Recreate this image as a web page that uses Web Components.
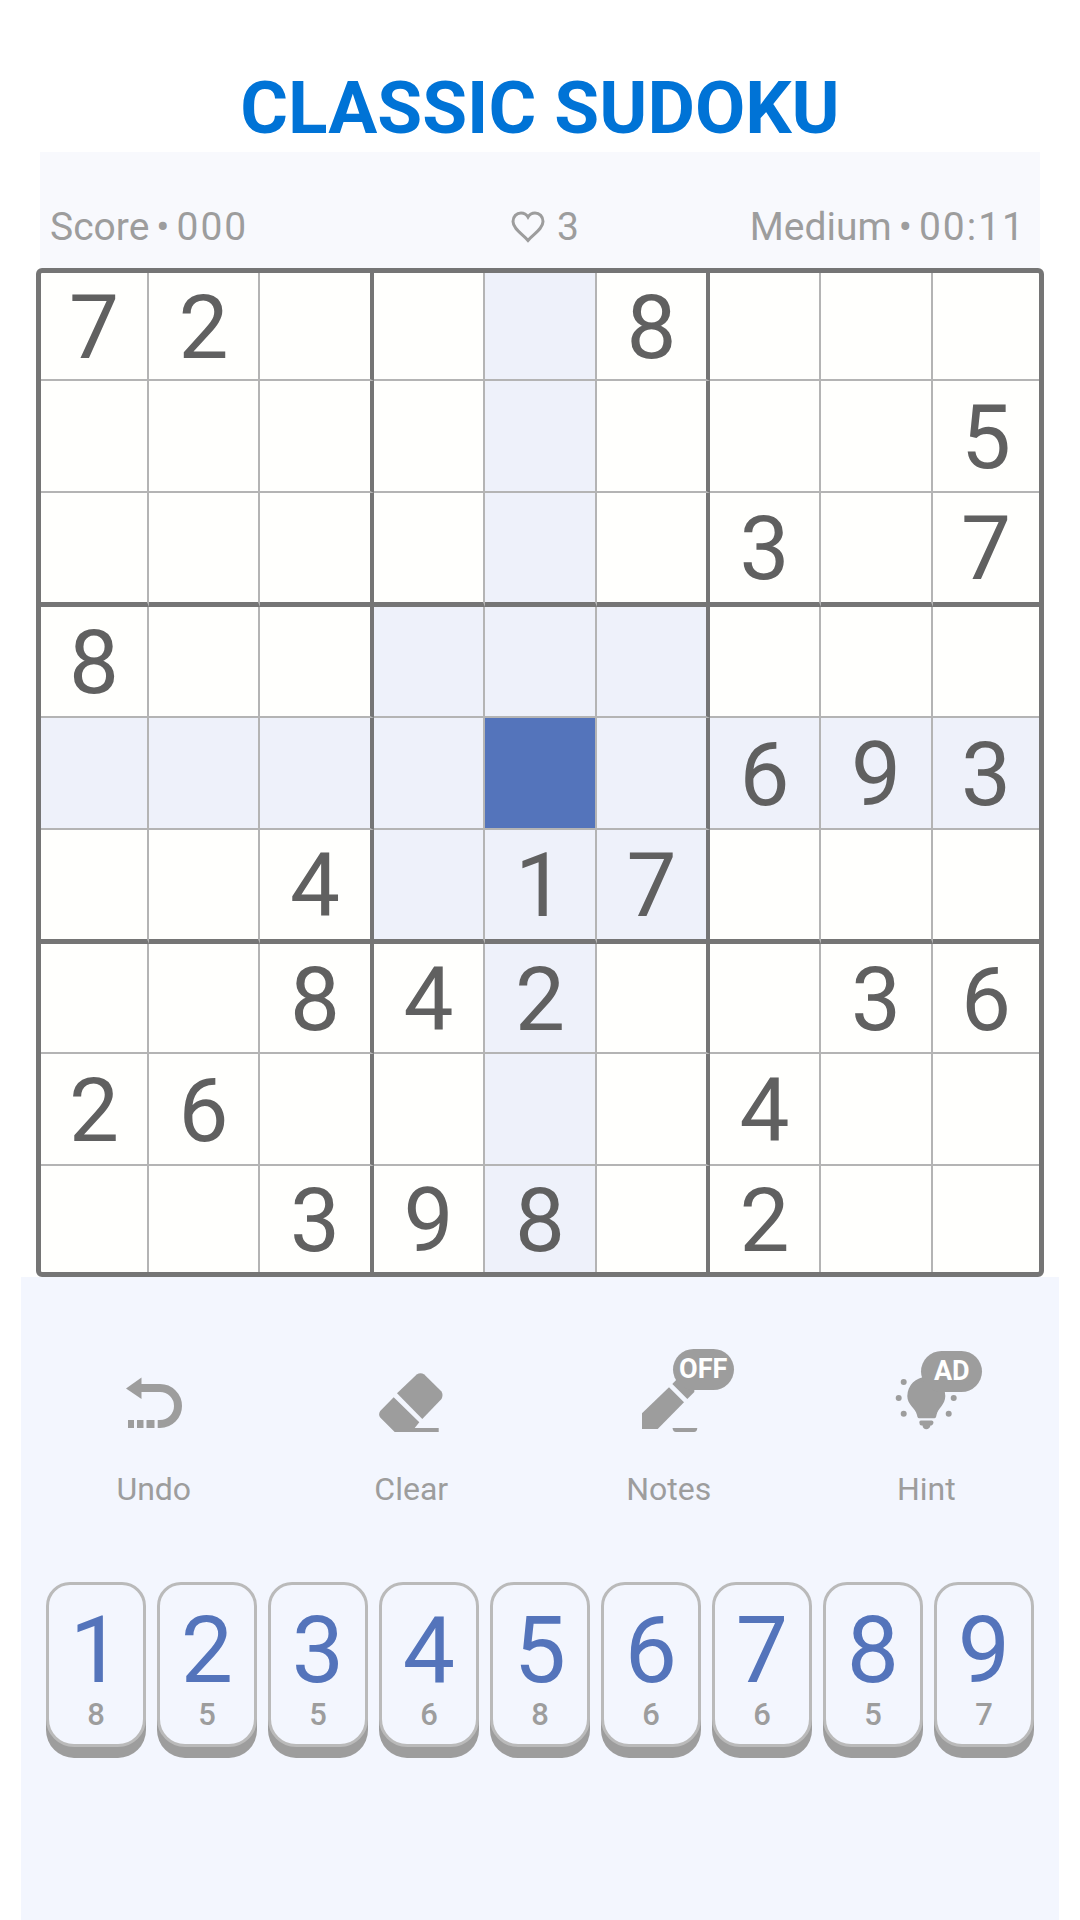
<!DOCTYPE html>
<html lang="en">
<head>
<meta charset="utf-8">
<meta name="viewport" content="width=device-width, initial-scale=1">
<title>Classic Sudoku</title>
<style>
  body {
    margin: 0;
    background: #fff;
    font-family: Roboto, "Liberation Sans", sans-serif;
    --ink: #606060;
    --muted: #9d9d9d;
    --accent: #5474bb;
    --line: #b4b4b4;
    --frame: #757575;
    --panel: #f3f6fe;
  }
</style>
</head>
<body>
<sudoku-app></sudoku-app>

<script>
class GameStatus extends HTMLElement {
  constructor() {
    super();
    this.attachShadow({ mode: 'open' });
  }

  connectedCallback() {
    this.shadowRoot.innerHTML = `
      <style>
        :host {
          display: grid;
          grid-template-columns: 1fr auto 1fr;
          align-items: center;
          margin: 0 40px;
          padding: 51px 10px 17px;
          background: #f8f9fd;
          color: var(--muted);
          font-size: 39px;
          line-height: 48px;
        }
        .lives {
          display: flex;
          align-items: center;
          gap: 12px;
          padding-left: 10px;
        }
        .right {
          text-align: right;
          padding-right: 4px;
        }
        svg { display: block; }
      </style>
      <slot name="score"></slot>
      <div class="lives">
        <svg width="34" height="32" viewBox="0 0 34 32" fill="none" stroke="currentColor" stroke-width="3" aria-hidden="true">
          <path d="M17 29.500C12 23.500 2 18 2 10.500C2 5.500 5.500 2 10 2C13 2 15.500 3.500 17 6C18.500 3.500 21 2 24 2C28.500 2 32 5.500 32 10.500C32 18 22 23.500 17 29.500Z"/>
        </svg>
        <slot name="lives"></slot>
      </div>
      <div class="right"><slot name="time"></slot></div>
    `;
  }
}

class SudokuBoard extends HTMLElement {
  constructor() {
    super();
    this.attachShadow({ mode: 'open' });
    this.selectedRow = 4;
    this.selectedCol = 4;
  }

  connectedCallback() {
    this.render();
    this.createCells();
  }

  render() {
    this.shadowRoot.innerHTML = `
      <style>
        :host {
          display: block;
          margin: 0 36px;
        }
        .board {
          display: grid;
          grid-template-columns: 108fr 111fr 114fr 111fr 112fr 113fr 111fr 112fr 106fr;
          grid-template-rows: 108fr 112fr 114fr 111fr 112fr 114fr 110fr 112fr 106fr;
          box-sizing: border-box;
          aspect-ratio: 1008 / 1009;
          border: 5px solid var(--frame);
          border-radius: 6px;
          background: #fffffd;
        }
        button {
          min-width: 0;
          min-height: 0;
          margin: 0;
          padding: 2px 0 0;
          border: 0 solid var(--line);
          border-width: 0 2px 2px 0;
          background: none;
          color: var(--ink);
          font: 89px/1 Roboto, "Liberation Sans", sans-serif;
        }
        .last-col { border-right-width: 0; }
        .last-row { border-bottom-width: 0; }
        .box-col { border-right: 4px solid var(--frame); }
        .box-row { border-bottom: 5px solid var(--frame); }
        .related { background: #eef1fa; }
        .selected { background: var(--accent); }
      </style>
      <div class="board" role="group" aria-label="Sudoku board"></div>
    `;
    this.board = this.shadowRoot.querySelector('.board');
  }

  isRelated(row, col) {
    const sameBox =
      Math.floor(row / 3) === Math.floor(this.selectedRow / 3) &&
      Math.floor(col / 3) === Math.floor(this.selectedCol / 3);
    return row === this.selectedRow || col === this.selectedCol || sameBox;
  }

  createCells() {
    const rows = this.getAttribute('puzzle').trim().split(/\s+/);
    rows.forEach((line, row) => {
      [...line].forEach((value, col) => {
        const cell = document.createElement('button');
        cell.type = 'button';
        cell.setAttribute('aria-label', `Row ${row + 1}, column ${col + 1}`);
        cell.textContent = value === '.' ? '' : value;
        if (row === this.selectedRow && col === this.selectedCol) {
          cell.classList.add('selected');
        } else if (this.isRelated(row, col)) {
          cell.classList.add('related');
        }
        if (col === 8) cell.classList.add('last-col');
        else if (col % 3 === 2) cell.classList.add('box-col');
        if (row === 8) cell.classList.add('last-row');
        else if (row % 3 === 2) cell.classList.add('box-row');
        this.board.appendChild(cell);
      });
    });
  }
}

const toolIcons = {
  undo: `
    <path d="M36 42.500L51.500 31.500V53Z"/>
    <path d="M50 42H70A18 18 0 0 1 70 78H67.700" fill="none" stroke="currentColor" stroke-width="8"/>
    <path d="M38 74h6v8h-6zM47 74h6.500v8H47zM56.500 74h8v8h-8z"/>`,
  clear: `
    <path d="M50 47.300L69.700 28.500Q73.500 26 77.300 28.500L94.500 45.500Q96.500 49 94.500 53L75.300 73Z"/>
    <path d="M46.700 51.300L72.300 76.300L67.700 82H91.700V86H47.700L33.200 71.500Q31 68.500 33.200 65Z"/>`,
  notes: `
    <path d="M64 41.300L79 56.300L52.700 83H37V67.300Z"/>
    <path d="M67.300 38L82.300 53L89.300 46V43L76 29Z"/>
    <path d="M67.500 82H92.300Q92 86 89 86H71Q68 86 67.500 82Z"/>`,
  hint: `
    <path d="M64.300 31A19 19 0 0 1 83.300 50C83.300 59 76 62 74.500 69Q74 72.300 72.500 72.300H57Q55.500 72.300 55 69C53.500 62 45.300 59 45.300 50A19 19 0 0 1 64.300 31Z"/>
    <path d="M59.500 74.500H69.500Q71.500 74.500 71.500 76.500T69.500 79.500H68.500Q67.500 83.300 64.300 83.300T60.500 79.500H59.500Q57.300 79 57.300 76.500T59.500 74.500Z"/>
    <circle cx="41.700" cy="36" r="3"/>
    <circle cx="36.700" cy="52" r="3"/>
    <circle cx="41.700" cy="67.700" r="3"/>
    <circle cx="86.700" cy="67.700" r="3"/>
    <circle cx="91.700" cy="52" r="3"/>`
};

class ToolButton extends HTMLElement {
  constructor() {
    super();
    this.attachShadow({ mode: 'open' });
  }

  connectedCallback() {
    const icon = this.getAttribute('icon');
    const badge = this.getAttribute('badge');
    this.shadowRoot.innerHTML = `
      <style>
        :host { display: block; }
        button {
          display: flex;
          flex-direction: column;
          align-items: center;
          gap: 35px;
          width: 100%;
          margin: 0;
          padding: 0;
          border: 0;
          background: none;
          color: var(--muted);
          font: 32px/40px Roboto, "Liberation Sans", sans-serif;
        }
        .icon { position: relative; }
        svg { display: block; }
        .badge {
          position: absolute;
          top: 3px;
          left: 68px;
          width: 61px;
          border-radius: 21px;
          background: var(--muted);
          color: #fff;
          font-size: 27px;
          font-weight: 700;
          line-height: 41px;
          text-align: center;
        }
        .hint .badge {
          top: 5px;
          left: 59px;
        }
      </style>
      <button type="button">
        <span class="icon ${icon}">
          <svg width="128" height="88" viewBox="0 0 128 88" fill="currentColor" aria-hidden="true">${toolIcons[icon]}</svg>
          ${badge ? `<span class="badge">${badge}</span>` : ''}
        </span>
        <slot></slot>
      </button>
    `;
  }
}

class NumberKey extends HTMLElement {
  constructor() {
    super();
    this.attachShadow({ mode: 'open' });
  }

  connectedCallback() {
    this.shadowRoot.innerHTML = `
      <style>
        :host {
          display: block;
          flex: 1;
          min-width: 0;
        }
        button {
          display: flex;
          flex-direction: column;
          align-items: center;
          box-sizing: border-box;
          width: 100%;
          margin: 0;
          padding: 20px 0 12px;
          border: 3px solid #bababa;
          border-radius: 24px 24px 28px 28px;
          background: var(--panel);
          box-shadow: 0 11px 0 var(--muted);
          font-family: inherit;
        }
        .digit {
          color: var(--accent);
          font-size: 93px;
          line-height: 92px;
        }
        .left {
          color: var(--muted);
          font-size: 31px;
          font-weight: 500;
          line-height: 35px;
        }
      </style>
      <button type="button">
        <span class="digit">${this.getAttribute('digit')}</span>
        <span class="left">${this.getAttribute('left')}</span>
      </button>
    `;
  }
}

class SudokuApp extends HTMLElement {
  constructor() {
    super();
    this.attachShadow({ mode: 'open' });
    this.remaining = [8, 5, 5, 6, 8, 6, 6, 5, 7];
  }

  connectedCallback() {
    const keys = this.remaining
      .map((left, i) => `<number-key digit="${i + 1}" left="${left}"></number-key>`)
      .join('');
    this.shadowRoot.innerHTML = `
      <style>
        :host {
          display: flex;
          flex-direction: column;
          min-height: 100vh;
        }
        h1 {
          margin: 0;
          padding-top: 64px;
          color: #0073d6;
          font-size: 73px;
          font-weight: 700;
          line-height: 88px;
          text-align: center;
        }
        .dot { margin: 0 7px; }
        .figures { letter-spacing: 2px; }
        .panel {
          flex: 1;
          margin: 0 21px;
          background: var(--panel);
        }
        .tools {
          display: grid;
          grid-template-columns: repeat(4, 1fr);
          padding: 69px 4px 73px;
        }
        .keys {
          display: flex;
          gap: 11px;
          padding: 0 25px;
        }
      </style>
      <h1>CLASSIC SUDOKU</h1>
      <game-status>
        <span slot="score">Score<span class="dot">•</span><span class="figures">000</span></span>
        <span slot="lives">3</span>
        <span slot="time">Medium<span class="dot">•</span><span class="figures">00:11</span></span>
      </game-status>
      <sudoku-board puzzle="
        72...8...
        ........5
        ......3.7
        8........
        ......693
        ..4.17...
        ..842..36
        26....4..
        ..398.2.."></sudoku-board>
      <div class="panel">
        <div class="tools">
          <tool-button icon="undo">Undo</tool-button>
          <tool-button icon="clear">Clear</tool-button>
          <tool-button icon="notes" badge="OFF">Notes</tool-button>
          <tool-button icon="hint" badge="AD">Hint</tool-button>
        </div>
        <div class="keys">${keys}</div>
      </div>
    `;
  }
}

customElements.define('game-status', GameStatus);
customElements.define('sudoku-board', SudokuBoard);
customElements.define('tool-button', ToolButton);
customElements.define('number-key', NumberKey);
customElements.define('sudoku-app', SudokuApp);
</script>
</body>
</html>
